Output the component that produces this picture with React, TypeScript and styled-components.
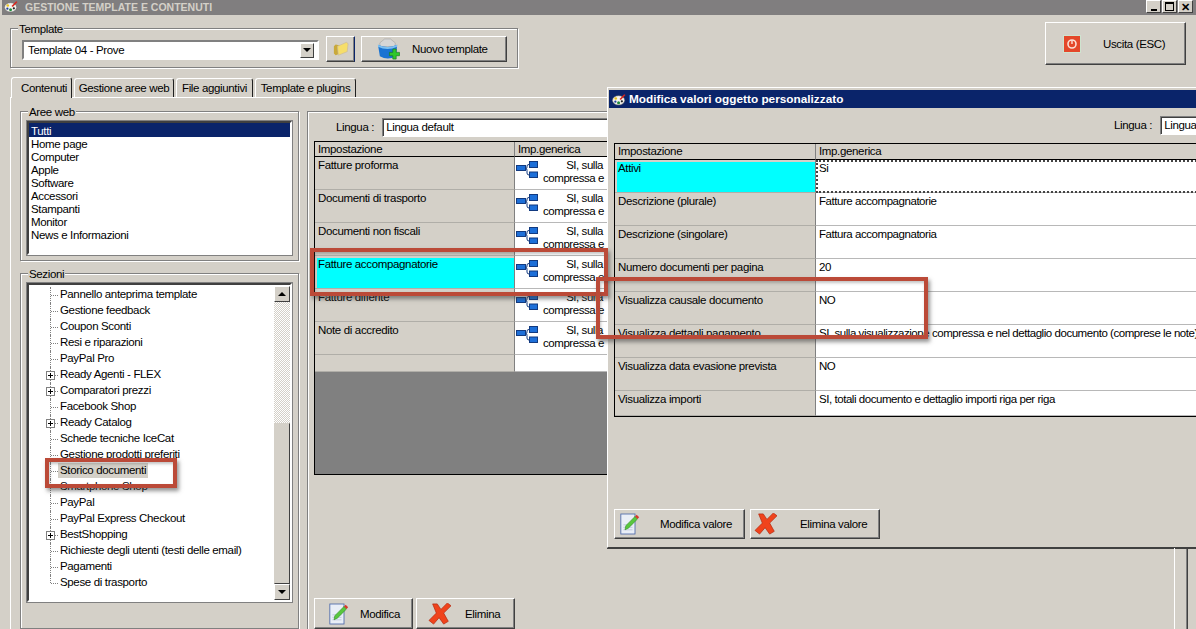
import { FC, ReactNode } from "react";
import styled, { createGlobalStyle } from "styled-components";

const FACE = "#d4d0c8";
const SHADOW = "#808080";

const GlobalStyle = createGlobalStyle`
  html, body {
    margin: 0;
    padding: 0;
    background: ${FACE};
    overflow: hidden;
  }
  * {
    box-sizing: border-box;
  }
`;

const Screen = styled.div`
  position: relative;
  width: 1196px;
  height: 629px;
  overflow: hidden;
  background: ${FACE};
  color: #000;
  font-family: "Liberation Sans", Arial, sans-serif;
  font-size: 11.5px;
  letter-spacing: -0.35px;
  line-height: 13px;
`;

const TitleBar = styled.div`
  display: flex;
  align-items: flex-start;
  height: 15px;
  margin-left: 2px;
  padding: 0 3px 0 2px;
  gap: 6px;
  background: #807e7f;
  color: #d4d0c8;
  font-weight: bold;
  font-size: 10.5px;
  letter-spacing: 0;
`;

const TitleText = styled.span`
  flex: 1;
  padding-top: 1px;
`;

const WindowButtons = styled.div`
  display: flex;
  gap: 1px;
`;

const WindowButton = styled.div`
  display: flex;
  align-items: center;
  justify-content: center;
  width: 15px;
  height: 13px;
  background: ${FACE};
  border: 1px solid;
  border-color: #fff #404040 #404040 #fff;
  color: #000;
  font-size: 11px;
  line-height: 10px;
`;

const MinGlyph = styled.span`
  width: 6px;
  height: 2px;
  margin-top: 6px;
  background: #000;
`;

const MaxGlyph = styled.span`
  width: 9px;
  height: 9px;
  border: 1px solid #000;
  border-top-width: 2px;
`;

const TopRow = styled.div`
  display: flex;
  align-items: flex-start;
  height: 62px;
  padding: 13px 10px 0 10px;
`;

const Group = styled.div<{ $width?: number; $height?: number }>`
  position: relative;
  width: ${({ $width }) => ($width ? `${$width}px` : "auto")};
  height: ${({ $height }) => ($height ? `${$height}px` : "auto")};
  border: 1px solid ${SHADOW};
  box-shadow: inset 1px 1px 0 #fff, 1px 1px 0 #fff;
`;

const Legend = styled.span`
  position: absolute;
  top: -6px;
  left: 7px;
  padding: 0 1px;
  line-height: 12px;
  background: ${FACE};
`;

const TemplateRow = styled.div`
  display: flex;
  align-items: flex-start;
  padding: 7px 0 0 11px;
`;

const Combo = styled.div`
  display: flex;
  align-items: center;
  justify-content: space-between;
  width: 297px;
  height: 20px;
  margin-top: 4px;
  padding: 0 3px 0 4px;
  background: #fff;
  border: 2px solid;
  border-color: ${SHADOW} #fff #fff ${SHADOW};
`;

const ComboArrow = styled.div`
  display: flex;
  align-items: center;
  justify-content: center;
  width: 14px;
  height: 15px;
  background: ${FACE};
  border: 1px solid;
  border-color: #fff #404040 #404040 #fff;
`;

const ArrowDown = styled.span`
  width: 0;
  height: 0;
  border-left: 4px solid transparent;
  border-right: 4px solid transparent;
  border-top: 4px solid #000;
`;

const ArrowUp = styled.span`
  width: 0;
  height: 0;
  border-left: 4px solid transparent;
  border-right: 4px solid transparent;
  border-bottom: 4px solid #000;
`;

const Button = styled.button<{ $width: number; $height: number; $pad?: number; $iconGap?: number }>`
  display: flex;
  align-items: center;
  justify-content: flex-start;
  gap: ${({ $iconGap }) => $iconGap ?? 8}px;
  width: ${({ $width }) => $width}px;
  height: ${({ $height }) => $height}px;
  padding: 0 0 0 ${({ $pad }) => $pad ?? 5}px;
  flex-shrink: 0;
  background: ${FACE};
  border: 1px solid;
  border-color: #fff #404040 #404040 #fff;
  box-shadow: inset -1px -1px 0 ${SHADOW};
  color: #000;
  font-family: inherit;
  font-size: inherit;
  letter-spacing: inherit;
`;

const FolderButton = styled(Button)`
  margin-left: 7px;
  border-right-color: #0a246a;
`;

const NewTemplateButton = styled(Button)`
  margin-left: 6px;
`;

const ExitButton = styled(Button)`
  margin-left: auto;
  margin-top: -6px;
`;

const TabStrip = styled.div`
  display: flex;
  align-items: flex-end;
  height: 20px;
  padding-left: 11px;
  gap: 2px;
`;

const Tab = styled.div<{ $active?: boolean; $width: number }>`
  position: relative;
  width: ${({ $width }) => $width}px;
  height: ${({ $active }) => ($active ? 21 : 19)}px;
  padding: ${({ $active }) => ($active ? "4px 0 0 5px" : "3px 0 0 0")};
  margin-bottom: ${({ $active }) => ($active ? -1 : 0)}px;
  text-align: center;
  white-space: nowrap;
  background: ${FACE};
  border: solid;
  border-width: 1px 1px 0 1px;
  border-color: #fff #202020 ${FACE} #fff;
  border-radius: 3px 3px 0 0;
  z-index: ${({ $active }) => ($active ? 1 : 0)};
`;

const TabPanel = styled.div`
  display: flex;
  gap: 8px;
  height: 532px;
  margin-left: 10px;
  padding: 13px 0 0 9px;
  border-top: 1px solid #fff;
  border-left: 1px solid #fff;
`;

const LeftColumn = styled.div`
  display: flex;
  flex-direction: column;
  gap: 12px;
  width: 279px;
  flex-shrink: 0;
`;

const ListBox = styled.div`
  height: 134px;
  margin: 9px 6px 0 6px;
  background: #fff;
  border: 2px solid;
  border-color: #404040 #fff #fff #404040;
  box-shadow: 0 0 0 1px ${SHADOW};
`;

const ListItem = styled.div<{ $selected?: boolean }>`
  height: ${({ $selected }) => ($selected ? 14 : 13)}px;
  padding-left: 2px;
  line-height: ${({ $selected }) => ($selected ? 16 : 15)}px;
  background: ${({ $selected }) => ($selected ? "#0a246a" : "transparent")};
  color: ${({ $selected }) => ($selected ? "#fff" : "#000")};
`;

const TreeBox = styled(ListBox)`
  display: flex;
  height: 319px;
`;

const TreeList = styled.div`
  flex: 1;
  padding-top: 2px;
`;

const TreeRow = styled.div<{ $last?: boolean }>`
  position: relative;
  display: flex;
  align-items: center;
  height: 16px;
  padding-left: 29px;
  &::before {
    content: "";
    position: absolute;
    left: 21px;
    top: 0;
    bottom: ${({ $last }) => ($last ? "8px" : "0")};
    border-left: 1px dotted #808080;
  }
  &::after {
    content: "";
    position: absolute;
    left: 22px;
    top: 8px;
    width: 7px;
    border-top: 1px dotted #808080;
  }
`;

const TreeLabel = styled.span<{ $selected?: boolean }>`
  padding: 1px 2px;
  background: ${({ $selected }) => ($selected ? FACE : "transparent")};
`;

const Expander = styled.span`
  position: absolute;
  left: 17px;
  top: 4px;
  z-index: 1;
  width: 9px;
  height: 9px;
  background:
    linear-gradient(#000, #000) center / 5px 1px no-repeat,
    linear-gradient(#000, #000) center / 1px 5px no-repeat,
    #fff;
  border: 1px solid #808080;
`;

const ScrollBar = styled.div`
  display: flex;
  flex-direction: column;
  width: 16px;
  padding-top: 1px;
  height: 100%;
`;

const ScrollTrack = styled.div`
  height: 121px;
  flex-shrink: 0;
  background: repeating-conic-gradient(#d4d0c8 0% 25%, #fff 0% 50%) 0 0 / 2px 2px;
`;

const ScrollThumb = styled.div`
  flex: 1;
  background: ${FACE};
  border: 1px solid;
  border-color: ${FACE} #404040 #404040 ${FACE};
`;

const ScrollArrow = styled.div`
  display: flex;
  align-items: center;
  justify-content: center;
  height: 16px;
  flex-shrink: 0;
  background: ${FACE};
  border: 1px solid;
  border-color: #fff #404040 #404040 #fff;
`;

const RightColumn = styled(Group)`
  flex: 1;
  height: 560px;
  margin-right: 9px;
  padding: 6px 0 0 6px;
`;

const LanguageRow = styled.div<{ $labelOffset: number }>`
  display: flex;
  align-items: center;
  height: 19px;
  padding-left: ${({ $labelOffset }) => $labelOffset}px;
  gap: 8px;
  white-space: nowrap;
`;

const LanguageInput = styled.div`
  flex: 1;
  height: 100%;
  padding: 2px 0 0 3px;
  white-space: nowrap;
  background: #fff;
  border: 1px solid;
  border-color: ${SHADOW} #fff #fff ${SHADOW};
  box-shadow: inset 1px 1px 0 #404040;
`;

const Grid = styled.div<{ $first: number; $top: number }>`
  display: grid;
  grid-template-columns: ${({ $first }) => $first}px 1fr;
  margin-top: ${({ $top }) => $top}px;
  background: #fff;
  border: 1px solid #000;
`;

const HeaderCell = styled.div<{ $height: number }>`
  height: ${({ $height }) => $height}px;
  padding: 1px 0 0 3px;
  background: ${FACE};
  border-right: 1px solid ${SHADOW};
  border-bottom: 1px solid #000;
`;

const LabelCell = styled.div<{ $height: number; $current?: boolean }>`
  height: ${({ $height }) => $height}px;
  padding: 2px 0 0 3px;
  background: ${({ $current }) => ($current ? "#00ffff" : FACE)};
  border-right: 1px solid ${SHADOW};
  border-bottom: 1px solid #b0aea8;
  box-shadow: ${({ $current }) => ($current ? `inset 2px 2px 0 ${FACE}` : "none")};
`;

const ValueCell = styled.div<{ $height: number; $focused?: boolean }>`
  display: flex;
  height: ${({ $height }) => $height}px;
  padding: 2px 0 0 3px;
  white-space: nowrap;
  letter-spacing: -0.45px;
  border-bottom: 1px solid #b8b8b8;
  outline: ${({ $focused }) => ($focused ? "2px dotted #444" : "none")};
  outline-offset: -2px;
`;

const InheritedCell = styled(ValueCell)`
  padding: 2px 0 0 1px;
  overflow: hidden;
`;

const InheritedText = styled.div`
  width: 60px;
  margin-left: 5px;
  text-align: right;
  white-space: nowrap;
`;

const EmptyArea = styled.div`
  height: 103px;
  margin-top: -1px;
  background: ${SHADOW};
  border: 1px solid #000;
  border-top: none;
`;

const MainActions = styled.div`
  display: flex;
  gap: 3px;
  margin-top: 123px;
`;

const Dialog = styled.div`
  position: absolute;
  left: 607px;
  top: 87px;
  width: 620px;
  height: 461px;
  padding: 2px 0 0 1px;
  background: ${FACE};
  border: 1px solid;
  border-color: #fff #404040 #404040 #fff;
  box-shadow: 0 1px 0 #404040;
`;

const DialogTitle = styled.div`
  display: flex;
  align-items: center;
  gap: 2px;
  height: 18px;
  padding-left: 3px;
  background: #0a246a;
  color: #fff;
  font-weight: bold;
  font-size: 11.8px;
  letter-spacing: 0;
`;

const DialogBody = styled.div`
  padding: 8px 0 0 5px;
`;

const DialogActions = styled.div`
  display: flex;
  gap: 5px;
  margin-top: 92px;
`;

const Annotation = styled.div<{ $x: number; $y: number; $w: number; $h: number }>`
  position: absolute;
  left: ${({ $x }) => $x}px;
  top: ${({ $y }) => $y}px;
  width: ${({ $w }) => $w}px;
  height: ${({ $h }) => $h}px;
  border: 4px solid #bb4a38;
  box-shadow: 2px 3px 4px rgba(60, 60, 60, 0.55), inset 1px 2px 3px rgba(60, 60, 60, 0.3);
  pointer-events: none;
`;

const StrayEdge = styled.div`
  position: absolute;
  top: 548px;
  left: 1174px;
  width: 14px;
  height: 81px;
  border-left: 1px solid #fff;
  border-right: 1px solid #404040;
`;

/* icons */

const AppIcon: FC = () => (
  <svg width="15" height="13" viewBox="0 0 16 13" style={{ flexShrink: 0 }}>
    <ellipse cx="7" cy="7.4" rx="6.5" ry="5" fill="#f4f2ee" stroke="#666" strokeWidth="0.6" />
    <circle cx="4" cy="5.4" r="1.4" fill="#e8c21c" />
    <circle cx="7" cy="10" r="1.6" fill="#1d8a3a" />
    <circle cx="3.6" cy="8.8" r="1.2" fill="#1f3f9c" />
    <circle cx="10.5" cy="8.4" r="1.2" fill="#222" />
    <path d="M8 6 L13 0.8 L14.4 1.8 L9.4 7 Z" fill="#d8261c" />
  </svg>
);

const FolderIcon: FC = () => (
  <svg width="16" height="16" viewBox="0 0 18 18">
    <path d="M1 6 L3 4 L8 5 L8 14 L3 16 L1 14 Z" fill="#c9a93a" />
    <path d="M5 6 L15 1.5 L17 3 L16 12 L6 16 Z" fill="#f6de6a" stroke="#c7b6a0" strokeWidth="0.7" />
  </svg>
);

const NewTemplateIcon: FC = () => (
  <svg width="23" height="23" viewBox="0 0 24 24">
    <path d="M3 5 L8 1 L14 1 L19 5 L19 9 L3 9 Z" fill="#d6d6d6" stroke="#a0a0a0" strokeWidth="0.6" />
    <path d="M1 7 Q11 12 21 7 L20 19 Q11 24 3 19 Z" fill="#1a73d2" />
    <path d="M1 7 Q11 12 21 7 L21 9 Q11 14 1 9 Z" fill="#7cc0f2" />
    <path d="M13 15 H16.5 V11.5 H20 V15 H23.5 V18.5 H20 V22 H16.5 V18.5 H13 Z" fill="#2fc72c" stroke="#1b7d20" strokeWidth="0.7" />
  </svg>
);

const TreeIcon: FC = () => (
  <svg width="22" height="17" viewBox="0 0 22 17" style={{ flexShrink: 0, marginTop: 2 }}>
    <path d="M9 7.5 H10 Q11 7.5 11 6 V5 Q11 3.5 13 3.5 M10 7.5 Q11 7.5 11 9.5 V12 Q11 14 13 14" fill="none" stroke="#123a80" strokeWidth="1" />
    <rect x="0.5" y="4.5" width="9" height="5" fill="#1d6fd8" stroke="#123a80" />
    <rect x="13.5" y="0.5" width="8" height="6" fill="#1d6fd8" stroke="#123a80" />
    <rect x="13.5" y="11" width="8" height="5.5" fill="#1d6fd8" stroke="#123a80" />
  </svg>
);

const EditIcon: FC = () => (
  <svg width="20" height="22" viewBox="0 0 24 26" style={{ flexShrink: 0 }}>
    <rect x="1" y="1" width="17" height="24" fill="#e9eef7" stroke="#4a66a8" />
    <path d="M4 14 H15 M4 17 H15 M4 20 H15" stroke="#b9c4da" />
    <path d="M6 20 L7 15 L18 4 L21 7 L10 18 Z" fill="#59c73e" stroke="#2f8a22" strokeWidth="0.7" />
    <path d="M18 4 L20 2 L23 5 L21 7 Z" fill="#d63a2a" />
  </svg>
);

const DeleteIcon: FC = () => (
  <svg width="24" height="22" viewBox="0 0 24 24" style={{ flexShrink: 0 }}>
    <path
      d="M4 1 L9 1 L13 7 L20 0 L24 3 L16 11 L21 20 L16 23 L11 16 L5 23 L0 19 L8 11 Z"
      fill="#f0431c"
      stroke="#b52a10"
      strokeWidth="0.8"
      strokeLinejoin="round"
    />
  </svg>
);

const ExitIcon: FC = () => (
  <svg width="18" height="18" viewBox="0 0 18 18" style={{ flexShrink: 0 }}>
    <rect x="0.5" y="0.5" width="17" height="17" fill="#e4472a" stroke="#cfe3cf" />
    <circle cx="9" cy="9" r="4" fill="none" stroke="#fbe0d6" strokeWidth="1.6" />
    <path d="M9 5 V9" stroke="#fbe0d6" strokeWidth="1.4" />
  </svg>
);

/* data */

const AREAS = ["Tutti", "Home page", "Computer", "Apple", "Software", "Accessori", "Stampanti", "Monitor", "News e Informazioni"];

const SECTIONS: { label: string; expand?: boolean; selected?: boolean }[] = [
  { label: "Pannello anteprima template" },
  { label: "Gestione feedback" },
  { label: "Coupon Sconti" },
  { label: "Resi e riparazioni" },
  { label: "PayPal Pro" },
  { label: "Ready Agenti - FLEX", expand: true },
  { label: "Comparatori prezzi", expand: true },
  { label: "Facebook Shop" },
  { label: "Ready Catalog", expand: true },
  { label: "Schede tecniche IceCat" },
  { label: "Gestione prodotti preferiti" },
  { label: "Storico documenti", selected: true },
  { label: "Smartphone Shop" },
  { label: "PayPal" },
  { label: "PayPal Express Checkout" },
  { label: "BestShopping", expand: true },
  { label: "Richieste degli utenti (testi delle email)" },
  { label: "Pagamenti" },
  { label: "Spese di trasporto" },
];

const DOCUMENTS = [
  "Fatture proforma",
  "Documenti di trasporto",
  "Documenti non fiscali",
  "Fatture accompagnatorie",
  "Fatture differite",
  "Note di accredito",
];

const VALUES: [string, string][] = [
  ["Attivi", "Si"],
  ["Descrizione (plurale)", "Fatture accompagnatorie"],
  ["Descrizione (singolare)", "Fattura accompagnatoria"],
  ["Numero documenti per pagina", "20"],
  ["Visualizza causale documento", "NO"],
  ["Visualizza dettagli pagamento", "SI, sulla visualizzazione compressa e nel dettaglio documento (comprese le note)"],
  ["Visualizza data evasione prevista", "NO"],
  ["Visualizza importi", "SI, totali documento e dettaglio importi riga per riga"],
];

const ActionButton: FC<{ icon: ReactNode; label: string; width: number; pad: number; gap: number; height?: number }> = ({
  icon,
  label,
  width,
  pad,
  gap,
  height = 30,
}) => (
  <Button $width={width} $height={height} $pad={pad} $iconGap={gap}>
    {icon}
    {label}
  </Button>
);

function Row({ label, current }: { label: string; current: boolean }) {
  return (
    <>
      <LabelCell $height={33} $current={current}>
        {label}
      </LabelCell>
      <InheritedCell $height={33}>
        <TreeIcon />
        <InheritedText>
          SI, sulla
          <br />
          compressa e
        </InheritedText>
      </InheritedCell>
    </>
  );
}

function DialogRow({ label, value, height, current }: { label: string; value: string; height: number; current: boolean }) {
  return (
    <>
      <LabelCell $height={height} $current={current}>
        {label}
      </LabelCell>
      <ValueCell $height={height} $focused={current}>
        {value}
      </ValueCell>
    </>
  );
}

export default function App() {
  return (
    <Screen>
      <GlobalStyle />
      <TitleBar>
        <AppIcon />
        <TitleText>GESTIONE TEMPLATE E CONTENUTI</TitleText>
        <WindowButtons>
          <WindowButton>
            <MinGlyph />
          </WindowButton>
          <WindowButton>
            <MaxGlyph />
          </WindowButton>
          <WindowButton>✕</WindowButton>
        </WindowButtons>
      </TitleBar>

      <TopRow>
        <Group $width={508} $height={40}>
          <Legend>Template</Legend>
          <TemplateRow>
            <Combo>
              Template 04 - Prove
              <ComboArrow>
                <ArrowDown />
              </ComboArrow>
            </Combo>
            <FolderButton $width={29} $height={26} $pad={6}>
              <FolderIcon />
            </FolderButton>
            <NewTemplateButton $width={146} $height={26} $pad={15} $iconGap={12}>
              <NewTemplateIcon />
              Nuovo template
            </NewTemplateButton>
          </TemplateRow>
        </Group>
        <ExitButton $width={141} $height={43} $pad={17} $iconGap={22}>
          <ExitIcon />
          Uscita (ESC)
        </ExitButton>
      </TopRow>

      <TabStrip>
        <Tab $active $width={61}>Contenuti</Tab>
        <Tab $width={100}>Gestione aree web</Tab>
        <Tab $width={77}>File aggiuntivi</Tab>
        <Tab $width={101}>Template e plugins</Tab>
      </TabStrip>

      <TabPanel>
        <LeftColumn>
          <Group $height={151}>
            <Legend>Aree web</Legend>
            <ListBox>
              {AREAS.map((area, i) => (
                <ListItem key={area} $selected={i === 0}>
                  {area}
                </ListItem>
              ))}
            </ListBox>
          </Group>
          <Group $height={360}>
            <Legend>Sezioni</Legend>
            <TreeBox>
              <TreeList>
                {SECTIONS.map((section, i) => (
                  <TreeRow key={section.label} $last={i === SECTIONS.length - 1}>
                    {section.expand && <Expander />}
                    <TreeLabel $selected={section.selected}>{section.label}</TreeLabel>
                  </TreeRow>
                ))}
              </TreeList>
              <ScrollBar>
                <ScrollArrow>
                  <ArrowUp />
                </ScrollArrow>
                <ScrollTrack />
                <ScrollThumb />
                <ScrollArrow>
                  <ArrowDown />
                </ScrollArrow>
              </ScrollBar>
            </TreeBox>
          </Group>
        </LeftColumn>

        <RightColumn>
          <LanguageRow $labelOffset={22}>
            Lingua :
            <LanguageInput>Lingua default</LanguageInput>
          </LanguageRow>
          <Grid $first={200} $top={4}>
            <HeaderCell $height={15}>Impostazione</HeaderCell>
            <HeaderCell $height={15}>Imp.generica</HeaderCell>
            {DOCUMENTS.map((doc, i) => (
              <Row key={doc} label={doc} current={i === 3} />
            ))}
            <LabelCell $height={17} />
            <ValueCell $height={17} />
          </Grid>
          <EmptyArea />
          <MainActions>
            <ActionButton icon={<EditIcon />} label="Modifica" width={99} pad={14} gap={11} height={31} />
            <ActionButton icon={<DeleteIcon />} label="Elimina" width={99} pad={11} gap={13} height={31} />
          </MainActions>
        </RightColumn>
      </TabPanel>

      <Dialog>
        <DialogTitle>
          <AppIcon />
          Modifica valori oggetto personalizzato
        </DialogTitle>
        <DialogBody>
          <LanguageRow $labelOffset={500}>
            Lingua :
            <LanguageInput>Lingua default</LanguageInput>
          </LanguageRow>
          <Grid $first={201} $top={8}>
            <HeaderCell $height={16}>Impostazione</HeaderCell>
            <HeaderCell $height={16}>Imp.generica</HeaderCell>
            {VALUES.map(([label, value], i) => {
              const height = i === VALUES.length - 1 ? 25 : 33;
              return (
                <DialogRow key={label} label={label} value={value} height={height} current={i === 0} />
              );
            })}
          </Grid>
          <DialogActions>
            <ActionButton icon={<EditIcon />} label="Modifica valore" width={131} pad={5} gap={20} />
            <ActionButton icon={<DeleteIcon />} label="Elimina valore" width={130} pad={3} gap={22} />
          </DialogActions>
        </DialogBody>
      </Dialog>

      <StrayEdge />

      <Annotation $x={310} $y={248} $w={298} $h={48} />
      <Annotation $x={596} $y={277} $w={332} $h={62} />
      <Annotation $x={45} $y={458} $w={132} $h={30} />
    </Screen>
  );
}
